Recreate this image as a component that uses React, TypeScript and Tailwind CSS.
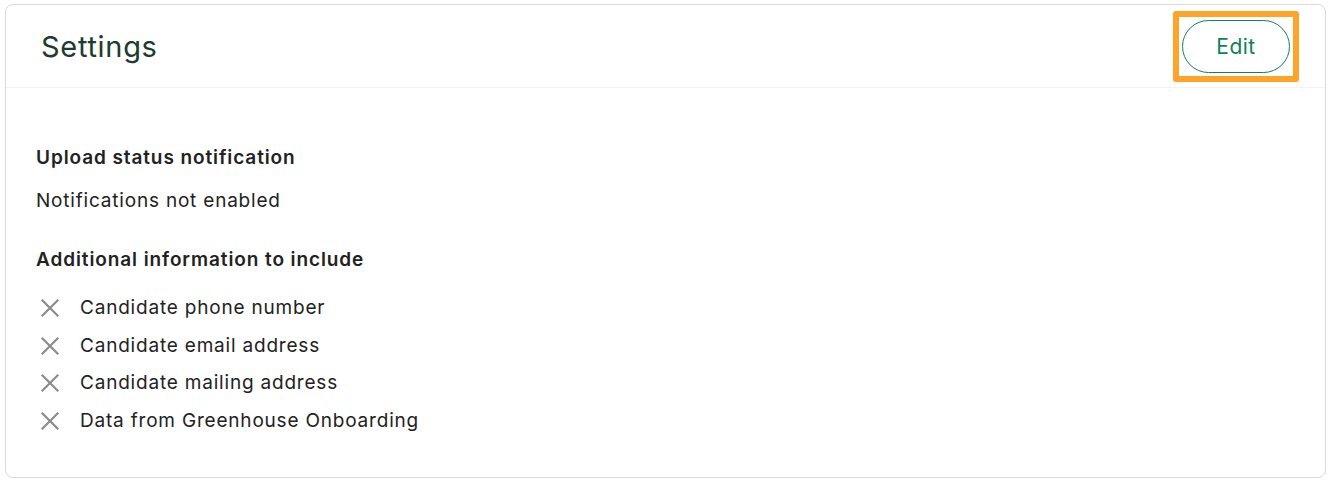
import React from 'react';

const items = [
  "Candidate phone number",
  "Candidate email address",
  "Candidate mailing address",
  "Data from Greenhouse Onboarding",
];

const XIcon = () => (
  <svg width="22" height="22" viewBox="0 0 22 22" fill="none" stroke="#8c8c8c" strokeWidth="2.2" strokeLinecap="square">
    <path d="M3.5 3.5 L18.5 18.5 M18.5 3.5 L3.5 18.5" />
  </svg>
);

export default function App() {
  return (
    <div className="bg-white p-[4px] pb-[6px]" style={{ fontFamily: 'Inter, "Open Sans", sans-serif' }}>
      <div className="border border-[#d7dbdb] rounded-[8px] w-[1321px] ml-[1px] h-[474px] bg-white">
        {/* header */}
        <div className="flex items-center justify-between h-[83px] pl-[35px] pr-[26px] border-b border-[#f3f3f3]">
          <h2 className="text-[29px] text-[#1d3b2f] tracking-[0.7px] mt-[2px]">Settings</h2>
          <span className="flex border-[6px] border-[#ffa42b] rounded-[3px] p-[3px] mt-[1px]">
            <button className="w-[108px] h-[53px] rounded-full border border-[#12805c] text-[#12805c] text-[21px] tracking-[0.5px]">
              Edit
            </button>
          </span>
        </div>

        <div className="px-[30px] pt-[57px] text-[#222222]">
          <div className="text-[19px] font-semibold leading-[26px] tracking-[0.9px]">Upload status notification</div>
          <div className="text-[19px] leading-[26px] mt-[17px] tracking-[0.8px]">Notifications not enabled</div>
          <div className="text-[19px] font-semibold leading-[26px] mt-[33px] tracking-[0.9px]">Additional information to include</div>
          <ul className="mt-[22px] flex flex-col gap-[11.5px]">
            {items.map((t) => (
              <li key={t} className="flex items-center gap-[19px] text-[19px] leading-[26px] tracking-[0.8px]">
                <span className="pl-[3px]"><XIcon /></span>
                {t}
              </li>
            ))}
          </ul>
        </div>
      </div>
    </div>
  );
}
